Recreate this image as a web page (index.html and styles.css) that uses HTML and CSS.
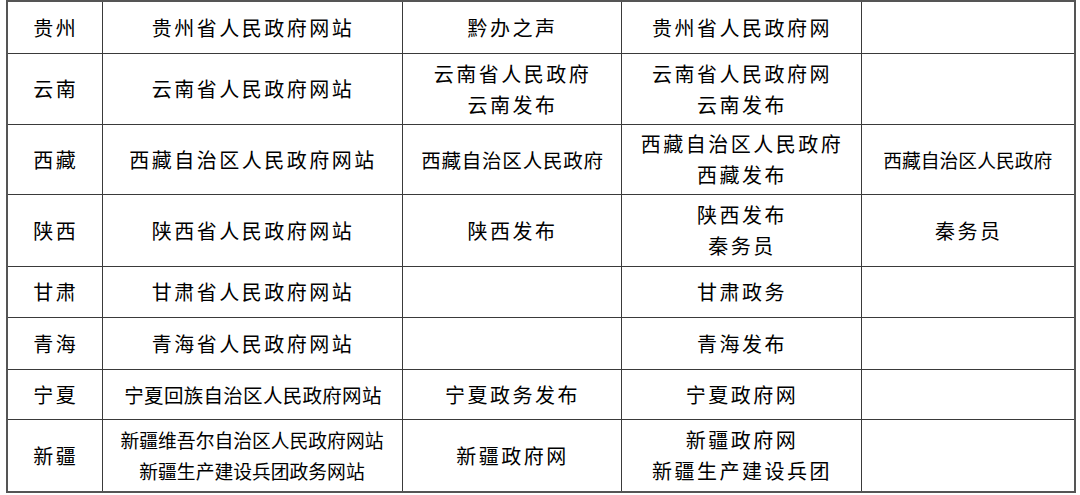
FILE: index.html
```html
<!DOCTYPE html>
<html lang="zh-CN">
<head>
<meta charset="utf-8">
<title>省级政府网站</title>
<link rel="stylesheet" href="styles.css">
</head>
<body>
<table class="grid">
  <colgroup>
    <col class="c1"><col class="c2"><col class="c3"><col class="c4"><col class="c5">
  </colgroup>
  <tbody>
    <tr class="r1">
      <td>贵州</td><td>贵州省人民政府网站</td><td>黔办之声</td><td>贵州省人民政府网</td><td></td>
    </tr>
    <tr class="r2">
      <td>云南</td><td>云南省人民政府网站</td><td>云南省人民政府<br>云南发布</td><td>云南省人民政府网<br>云南发布</td><td></td>
    </tr>
    <tr class="r3">
      <td>西藏</td><td>西藏自治区人民政府网站</td><td class="tight">西藏自治区人民政府</td><td>西藏自治区人民政府<br>西藏发布</td><td class="narrow">西藏自治区人民政府</td>
    </tr>
    <tr class="r4">
      <td>陕西</td><td>陕西省人民政府网站</td><td>陕西发布</td><td>陕西发布<br>秦务员</td><td>秦务员</td>
    </tr>
    <tr class="r5">
      <td>甘肃</td><td>甘肃省人民政府网站</td><td></td><td>甘肃政务</td><td></td>
    </tr>
    <tr class="r6">
      <td>青海</td><td>青海省人民政府网站</td><td></td><td>青海发布</td><td></td>
    </tr>
    <tr class="r7">
      <td>宁夏</td><td class="compact">宁夏回族自治区人民政府网站</td><td>宁夏政务发布</td><td>宁夏政府网</td><td></td>
    </tr>
    <tr class="r8">
      <td>新疆</td><td class="narrow">新疆维吾尔自治区人民政府网站<br>新疆生产建设兵团政务网站</td><td>新疆政府网</td><td>新疆政府网<br>新疆生产建设兵团</td><td></td>
    </tr>
  </tbody>
</table>
</body>
</html>
```

FILE: styles.css
```css
html, body {
  margin: 0;
  padding: 0;
  background: #ffffff;
}

body {
  padding-left: 6px;
  font-family: "Noto Sans CJK SC", "Noto Sans", sans-serif;
  color: #000000;
}

.grid {
  border-collapse: collapse;
  table-layout: fixed;
  width: 1068px;
  border: 2px solid #555555;
}

.c1 { width: 95px; }
.c2 { width: 300px; }
.c3 { width: 219px; }
.c4 { width: 240px; }
.c5 { width: 214px; }

.grid td {
  border: 1px solid #3a3a3a;
  padding: 0 0 0 2px;
  text-align: center;
  vertical-align: middle;
  font-size: 20px;
  line-height: 31px;
  letter-spacing: 2.5px;
  white-space: nowrap;
}

.grid td.tight {
  font-size: 19.5px;
  letter-spacing: 0.8px;
}

.grid td.compact {
  font-size: 19.5px;
  letter-spacing: 0.3px;
}

.grid td.narrow {
  font-size: 18.8px;
  letter-spacing: 0;
  padding-left: 0;
}

.r1 { height: 52px; }
.r2 { height: 71px; }
.r3 { height: 70px; }
.r4 { height: 72px; }
.r5 { height: 51px; }
.r6 { height: 52px; }
.r7 { height: 50px; }
.r8 { height: 73px; }
```
